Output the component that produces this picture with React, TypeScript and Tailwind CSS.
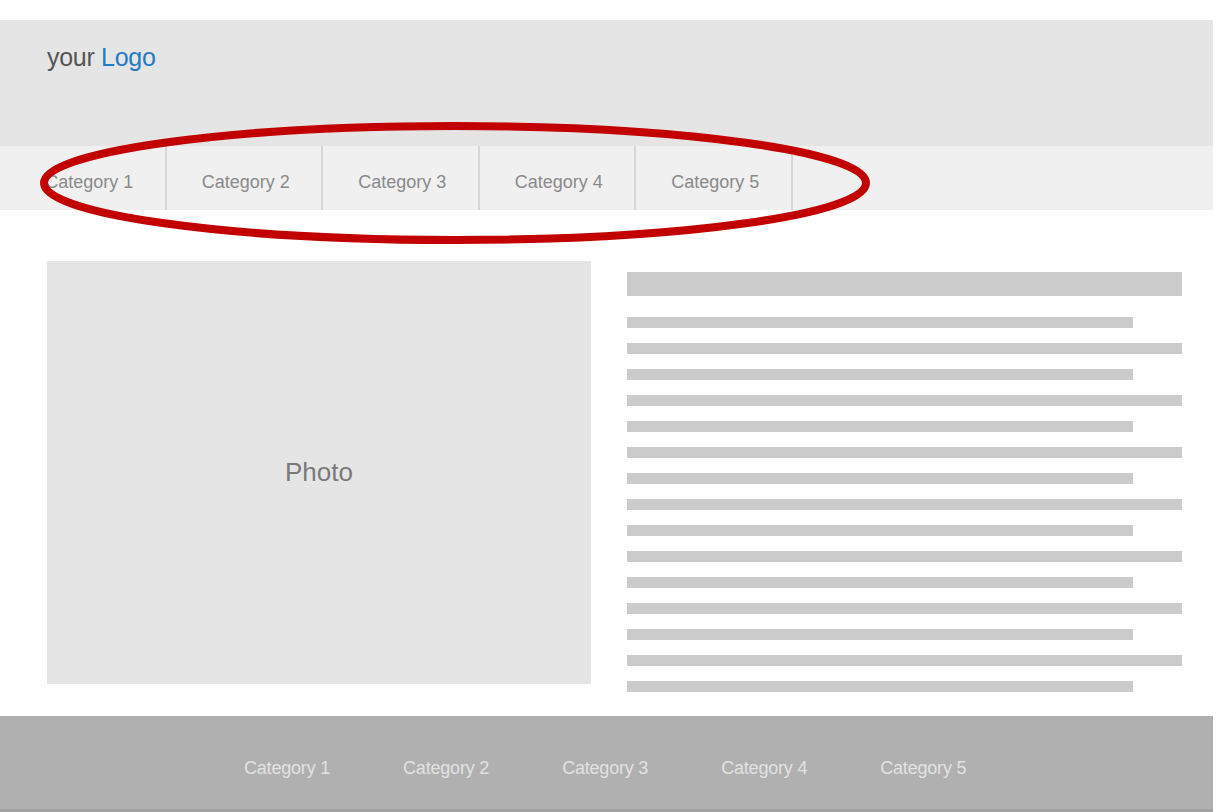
const CATEGORIES = ['Category 1', 'Category 2', 'Category 3', 'Category 4', 'Category 5']

// alternating short / long placeholder text lines
const LINES = Array.from({ length: 15 }, (_, i) => (i % 2 === 0 ? 'short' : 'long'))

export default function App() {
  return (
    <div className="relative w-[1220px] h-[812px] bg-white overflow-hidden pt-[20px] font-['Liberation_Sans',Arial,sans-serif]">
      <div className="w-[1213px]">
        {/* header */}
        <div className="h-[126px] bg-[#e5e5e5] pl-[47px] pt-[25px]">
          <p className="text-[25px] leading-none tracking-[-0.3px]">
            <span className="text-[#555]">your </span>
            <span className="text-[#1f7cc4]">Logo</span>
          </p>
        </div>

        {/* nav */}
        <div className="h-[64px] bg-[#f0f0f0] flex pl-[10px]">
          {CATEGORIES.map((c) => (
            <div
              key={c}
              className="w-[156.5px] h-full flex items-center justify-center pt-[9px] pl-[4px] border-r-2 border-[#d6d6d6] text-[18px] text-[#8a8a8a]"
            >
              {c}
            </div>
          ))}
        </div>

        {/* content */}
        <div className="flex items-start pl-[47px] pt-[51px] pb-[24px] gap-[36px]">
          <div className="w-[544px] h-[423px] bg-[#e5e5e5] flex items-center justify-center text-[26px] text-[#7a7a7a]">
            Photo
          </div>
          <div className="w-[555px] pt-[11px]">
            <div className="h-[24px] bg-[#cbcbcb]" />
            <div className="flex flex-col gap-[15px] mt-[21px]">
              {LINES.map((l, i) => (
                <div key={i} className={`h-[11px] bg-[#cbcbcb] ${l === 'short' ? 'w-[506px]' : 'w-full'}`} />
              ))}
            </div>
          </div>
        </div>

        {/* footer */}
        <div className="h-[96px] bg-[#b0b0b0] border-b-[3px] border-[#a2a2a2] flex items-center pt-[12px] pl-[244px] gap-[73px] text-[18px] text-[#e2e2e2] tracking-[-0.2px]">
          {CATEGORIES.map((c) => (
            <span key={c}>{c}</span>
          ))}
        </div>
      </div>

      {/* red highlight ellipse over the nav */}
      <svg className="absolute left-0 top-0 pointer-events-none" width="1220" height="812">
        <ellipse cx="455" cy="183" rx="411" ry="57" fill="none" stroke="#c20000" strokeWidth="8" />
      </svg>
    </div>
  )
}
